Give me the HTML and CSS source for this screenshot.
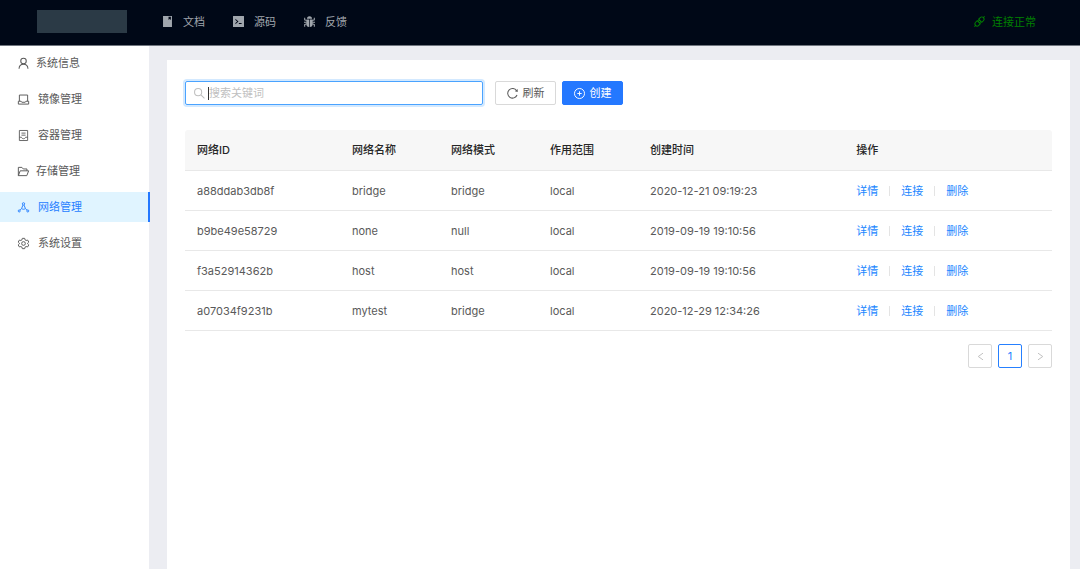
FILE: index.html
```html
<!DOCTYPE html>
<html lang="zh-CN">
<head>
<meta charset="utf-8">
<meta name="viewport" content="width=device-width, initial-scale=1">
<title>网络管理</title>
<link rel="stylesheet" href="styles.css">
</head>
<body>
<header class="topbar">
  <div class="brand"></div>
  <nav class="topnav">
    <a href="#docs"><svg class="icon" viewBox="0 0 16 16"><path fill="currentColor" fill-rule="evenodd" d="M1.500 0h13v16h-13zM9.500 1.200v4.600l1.700-1.300 1.700 1.300V1.200z"/></svg>文档</a>
    <a href="#source"><svg class="icon" viewBox="0 0 16 16"><path fill="currentColor" fill-rule="evenodd" d="M.5 0h15a.5.5 0 0 1 .5.5v15a.5.5 0 0 1-.5.5H.5a.5.5 0 0 1-.5-.5V.5A.5.5 0 0 1 .5 0zM3.500 4v1.800L6 8l-2.500 2.200V12L8 8zM8.500 10v1.500h4V10z"/></svg>源码</a>
    <a href="#issues"><svg class="icon" viewBox="0 0 16 16"><path fill="currentColor" d="M4.300 4a3.700 3.700 0 0 1 7.400 0zM3.400 5h4.100v11a4.400 4.400 0 0 1-4.100-4.400zM8.500 5h4.100v6.600A4.400 4.400 0 0 1 8.500 16z"/><path fill="none" stroke="currentColor" stroke-width="1.500" d="M1 2.500v3L4 6.700M15 2.500v3l-3 1.200M0 9h4M12 9h4M1 15.500v-3l3-1.200M15 15.500v-3l-3-1.200"/></svg>反馈</a>
  </nav>
  <div class="status"><svg class="icon" viewBox="0 0 16 16"><g fill="none" stroke="currentColor" stroke-width="1.400" transform="rotate(45 8 8)"><path d="M4.800 6.500V3.200a3.200 3.200 0 0 1 6.400 0v3.300zM4.800 9.500h6.400v3.300a3.200 3.200 0 0 1-6.400 0zM6.500 6.500v3M9.500 6.500v3M8 0v-2.500M8 16v2.500"/></g></svg>连接正常</div>
</header>
<div class="layout">
  <nav class="sidebar">
    <a href="#system" class="tight"><svg class="icon" viewBox="0 0 16 16"><g fill="none" stroke="currentColor" stroke-width="1.500"><circle cx="8" cy="4.500" r="4"/><path d="M1.500 15.500c.2-4 2.800-6.500 6.500-6.500s6.300 2.500 6.500 6.500"/></g></svg>系统信息</a>
    <a href="#images"><svg class="icon" viewBox="0 0 16 16"><path fill="none" stroke="currentColor" stroke-width="1.400" d="M2 10.500V1.500h12v9M.5 10.500h4l1 1.500h5l1-1.500h4v4.200H.5z"/></svg>镜像管理</a>
    <a href="#containers"><svg class="icon" viewBox="0 0 16 16"><path fill="none" stroke="currentColor" stroke-width="1.300" d="M2 .7h12v14.600H2zM5 4.500h6M5 7.500h6M2 10.500h3c.5 1.500 1.500 2.200 3 2.200s2.500-.7 3-2.200h3"/></svg>容器管理</a>
    <a href="#storage" class="tight"><svg class="icon" viewBox="0 0 16 16"><path fill="none" stroke="currentColor" stroke-width="1.400" stroke-linejoin="round" d="M.5 14V2h5.200l2 2.300H13V7M.5 14 3.200 7h12.300l-2.700 7z"/></svg>存储管理</a>
    <a href="#networks" class="active" aria-current="page"><svg class="icon" viewBox="0 0 16 16"><g fill="none" stroke="currentColor" stroke-width="1.400"><circle cx="8" cy="2.700" r="1.700"/><circle cx="1.800" cy="13" r="1.500"/><circle cx="14.200" cy="13" r="1.500"/><path d="M7.200 4.500 5.200 9.500 3 11.800M8.800 4.500l2 5 2.200 2.300M5.200 9.500c1.700 1.400 3.900 1.400 5.600 0"/></g></svg>网络管理</a>
    <a href="#settings"><svg class="icon" viewBox="0 0 16 16"><g fill="none" stroke="currentColor" stroke-width="1.400" stroke-linejoin="round"><path d="M6.300.5h3.400l.6 2.300 1.500.8 2.200-.6 1.700 2.900-1.700 1.600v1l1.700 1.600-1.700 2.900-2.200-.6-1.500.8-.6 2.300H6.300l-.6-2.300-1.500-.8-2.200.6-1.700-2.900L2 8.500v-1L.3 5.900 2 3l2.200.6 1.500-.8z"/><circle cx="8" cy="8" r="2.700"/></g></svg>系统设置</a>
  </nav>
  <main class="panel">
    <form class="toolbar">
      <label class="search">
        <svg class="icon" viewBox="0 0 16 16"><path fill="none" stroke="currentColor" stroke-width="1.500" d="M11.200 6a5.200 5.200 0 1 1-10.400 0 5.200 5.200 0 0 1 10.400 0zM9.700 9.700l5.500 5.500"/></svg>
        <span class="caret"></span>
        <input type="text" placeholder="搜索关键词" aria-label="搜索关键词">
      </label>
      <button type="button" class="btn"><svg class="icon" viewBox="0 0 16 16"><path fill="none" stroke="currentColor" stroke-width="1.500" d="M14 4a7 7 0 1 0 .6 6.200"/><path fill="currentColor" d="M15.500 1.500v4.300l-4-.9z"/></svg>刷新</button>
      <button type="button" class="btn primary"><svg class="icon" viewBox="0 0 16 16"><path fill="none" stroke="currentColor" stroke-width="1.400" d="M15.300 8A7.300 7.300 0 1 1 .7 8a7.300 7.300 0 0 1 14.600 0zM4.800 8h6.400M8 4.800v6.400"/></svg>创建</button>
    </form>
    <table class="grid">
      <colgroup><col class="c-id"><col class="c-name"><col class="c-name"><col class="c-scope"><col class="c-time"><col></colgroup>
      <thead><tr><th>网络ID</th><th>网络名称</th><th>网络模式</th><th>作用范围</th><th>创建时间</th><th>操作</th></tr></thead>
      <tbody>
        <tr><td>a88ddab3db8f</td><td>bridge</td><td>bridge</td><td>local</td><td>2020-12-21 09:19:23</td><td><div class="actions"><a href="#detail">详情</a><a href="#connect">连接</a><a href="#delete">删除</a></div></td></tr>
        <tr><td>b9be49e58729</td><td>none</td><td>null</td><td>local</td><td>2019-09-19 19:10:56</td><td><div class="actions"><a href="#detail">详情</a><a href="#connect">连接</a><a href="#delete">删除</a></div></td></tr>
        <tr><td>f3a52914362b</td><td>host</td><td>host</td><td>local</td><td>2019-09-19 19:10:56</td><td><div class="actions"><a href="#detail">详情</a><a href="#connect">连接</a><a href="#delete">删除</a></div></td></tr>
        <tr><td>a07034f9231b</td><td>mytest</td><td>bridge</td><td>local</td><td>2020-12-29 12:34:26</td><td><div class="actions"><a href="#detail">详情</a><a href="#connect">连接</a><a href="#delete">删除</a></div></td></tr>
      </tbody>
    </table>
    <nav class="pager" aria-label="分页">
      <button type="button" disabled aria-label="上一页"><svg class="icon" viewBox="0 0 16 16"><path fill="none" stroke="currentColor" stroke-width="1.700" d="M12.500 2 4 8l8.500 6"/></svg></button>
      <button type="button" class="current" aria-current="page">1</button>
      <button type="button" disabled aria-label="下一页"><svg class="icon" viewBox="0 0 16 16"><path fill="none" stroke="currentColor" stroke-width="1.700" d="m3.500 2 8.500 6-8.500 6"/></svg></button>
    </nav>
  </main>
</div>
</body>
</html>
```
FILE: styles.css
```css
* { box-sizing: border-box; }

body {
  margin: 0;
  min-height: 100vh;
  display: flex;
  flex-direction: column;
  background: #ecedf2;
  color: #595959;
  font: 11px/18px Inter, "Noto Sans CJK SC", sans-serif;
}

a { color: inherit; text-decoration: none; }
button, input { font: inherit; color: inherit; }

.icon { width: 11px; height: 11px; flex: none; overflow: visible; }

.topbar {
  display: flex;
  align-items: center;
  height: 46px;
  padding: 0 44px 2px 37px;
  border-bottom: 1px solid #70767f;
  background: #000817;
  color: #a0a6ad;
}

.brand { width: 90px; height: 23px; background: #2b3a46; }

.topnav { display: flex; gap: 28px; margin-left: 35px; }
.topnav a, .status { display: flex; align-items: center; gap: 10px; }
.status { gap: 7px; margin-left: auto; color: #008000; }

.layout { flex: 1; display: flex; }

.sidebar {
  width: 150px;
  flex: none;
  display: flex;
  flex-direction: column;
  gap: 6px;
  padding-top: 2px;
  background: linear-gradient(to left, #ecedf2 1px, #fff 1px);
}
.sidebar a {
  display: flex;
  align-items: center;
  gap: 9px;
  height: 30px;
  padding-left: 18px;
}
.sidebar .tight { gap: 7px; }
.sidebar .active {
  background: #e0f4ff;
  border-right: 2px solid #2478ff;
  color: #2680ff;
}

.panel { flex: 1; margin: 14px 10px 0 17px; padding: 21px 18px; background: #fff; }

.toolbar { display: flex; gap: 6px; }

.search {
  flex: 0 1 298px;
  display: flex;
  align-items: center;
  height: 24px;
  margin-right: 6px;
  padding: 0 8px;
  border: 1px solid #4aa3ff;
  border-radius: 2px;
  box-shadow: 0 0 0 2px #d3e9ff;
  color: #bfbfbf;
}
.caret { width: 1px; height: 13px; margin-left: 3px; background: #333; }
.search input {
  flex: 1;
  min-width: 0;
  padding: 0;
  border: 0;
  outline: 0;
  background: transparent;
  color: #595959;
}
.search input::placeholder { color: #bfbfbf; }

.btn {
  display: flex;
  align-items: center;
  justify-content: center;
  gap: 5px;
  width: 61px;
  height: 24px;
  padding: 0;
  border: 1px solid #d9d9d9;
  border-radius: 2px;
  background: #fff;
}
.btn.primary { border-color: #2478ff; background: #2478ff; color: #fff; }

.grid {
  width: 100%;
  margin-top: 25px;
  table-layout: fixed;
  border-collapse: separate;
  border-spacing: 0;
}
.c-id { width: 155px; }
.c-name { width: 99px; }
.c-scope { width: 100px; }
.c-time { width: 23.8%; }
.grid th, .grid td {
  height: 40px;
  padding: 0 12px;
  border-bottom: 1px solid #e8e8e8;
  text-align: left;
}
.grid th { height: 41px; background: #f7f7f7; color: #262626; font-weight: 500; }
.grid th:first-child { border-top-left-radius: 3px; }
.grid th:last-child { border-top-right-radius: 3px; }

.actions { display: flex; align-items: center; color: #2186ff; }
.actions a + a { display: flex; align-items: center; }
.actions a + a::before { content: ""; width: 1px; height: 10px; margin: 0 11px; background: #e4e4e4; }

.pager { display: flex; justify-content: flex-end; gap: 6px; margin-top: 13px; }
.pager button {
  display: flex;
  align-items: center;
  justify-content: center;
  width: 24px;
  height: 24px;
  padding: 0;
  border: 1px solid #d9d9d9;
  border-radius: 2px;
  background: #fff;
  color: #bfbfbf;
}
.pager .current { border-color: #2680ff; color: #2680ff; }
.pager .icon { width: 9px; height: 9px; }
```
